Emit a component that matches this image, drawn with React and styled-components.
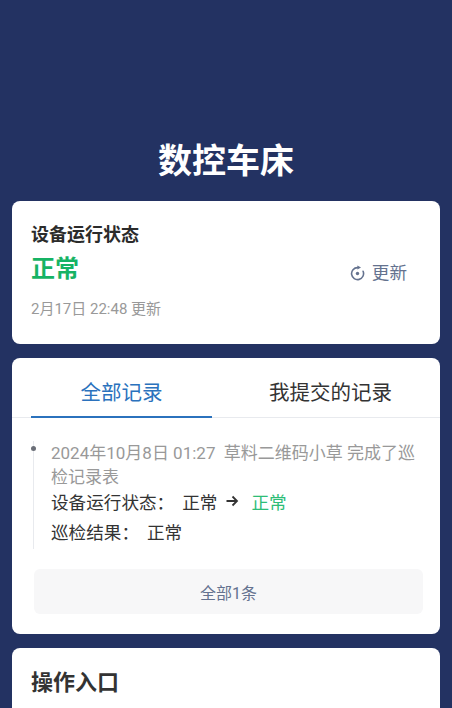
import styled, { createGlobalStyle } from "styled-components";

const GlobalStyle = createGlobalStyle`
  html, body {
    margin: 0;
    padding: 0;
    height: 100%;
    overflow: hidden;
  }
  body {
    background: #233262;
    font-family: Roboto, "Noto Sans CJK SC", sans-serif;
  }
`;

const Page = styled.div`
  height: 708px;
  overflow: hidden;
  padding: 137px 12px 0;
  box-sizing: border-box;
  display: flex;
  flex-direction: column;
`;

const Title = styled.h1`
  margin: 0 0 16px;
  height: 48px;
  line-height: 48px;
  color: #fff;
  font-size: 34px;
  font-weight: 700;
  text-align: center;
`;

const Card = styled.section`
  background: #fff;
  border-radius: 8px;
  margin-bottom: 14px;
  flex-shrink: 0;
`;

const StatusCard = styled(Card)`
  height: 143px;
  box-sizing: border-box;
  padding: 22px 19px 0;
`;

const StatusLabel = styled.div`
  font-size: 18px;
  font-weight: 700;
  line-height: 24px;
  color: #2b2b2b;
`;

const StatusRow = styled.div`
  display: flex;
  justify-content: space-between;
  align-items: center;
  height: 44px;
`;

const StatusValue = styled.div`
  font-size: 24px;
  font-weight: 700;
  line-height: 30px;
  color: #16b364;
`;

const RefreshButton = styled.div`
  display: flex;
  align-items: center;
  gap: 7px;
  margin: 8px 14px 0 0;
  font-size: 17.6px;
  line-height: 24px;
  color: #64728f;
`;

const UpdatedAt = styled.div`
  margin-top: 7px;
  font-size: 15px;
  line-height: 22px;
  color: #999;
`;

const RecordCard = styled(Card)`
  height: 276px;
`;

const Tabs = styled.div`
  display: grid;
  grid-template-columns: 181px 1fr;
  height: 60px;
  padding-left: 19px;
  border-bottom: 1px solid #e8eaee;
  box-sizing: border-box;
`;

const Tab = styled.div`
  display: flex;
  align-items: center;
  justify-content: center;
  font-size: 20.5px;
  height: 60px;
  box-sizing: border-box;
  padding: ${({ $active }) => ($active ? "7px 0 0" : "7px 0 0 9px")};
  color: ${({ $active }) => ($active ? "#2b72bd" : "#333")};
  border-bottom: 2.5px solid ${({ $active }) => ($active ? "#2b72bd" : "transparent")};
`;

const Timeline = styled.div`
  margin: 23px 0 0 21px;
  padding-left: 17px;
  border-left: 1px solid #e8eaee;
  position: relative;
  width: 368px;
  height: 108px;
`;

const Dot = styled.span`
  position: absolute;
  left: -3px;
  top: 5px;
  width: 5px;
  height: 5px;
  border-radius: 50%;
  background: #6b6f78;
`;

const LogText = styled.div`
  font-size: 17px;
  line-height: 24px;
  color: #999;
  white-space: pre-wrap;
`;

const DetailRow = styled.div`
  display: flex;
  align-items: center;
  height: 24px;
  margin-bottom: 6px;
  font-size: 17.6px;
  color: #333;
`;

const Label = styled.span`
  margin-right: 8px;
`;

const Arrow = styled.svg`
  width: 14px;
  height: 14px;
  margin: 0 12px 0 8px;
`;

const Good = styled.span`
  color: #2dbd77;
`;

const MoreButton = styled.div`
  margin: 20px 17px 0 22px;
  height: 45px;
  border-radius: 6px;
  background: #f7f7f8;
  display: flex;
  align-items: center;
  justify-content: center;
  font-size: 16px;
  color: #64728f;
`;

const EntryCard = styled(Card)`
  height: 120px;
  margin-bottom: 0;
  padding: 19px 19px 0;
  box-sizing: border-box;
`;

const EntryTitle = styled.h2`
  margin: 0;
  font-size: 22px;
  font-weight: 700;
  line-height: 32px;
  color: #333;
`;

function RefreshIcon() {
  return (
    <svg width="15" height="16" viewBox="0 0 15 16" fill="none">
      <path d="M7.5 2.6A6 6 0 1 0 13.1 6.3" stroke="#64728f" strokeWidth="1.6" strokeLinecap="round" />
      <path d="M7.4 0.6 11 2.6 7.4 4.6Z" fill="#64728f" />
      <circle cx="7.5" cy="8.5" r="1.7" fill="#64728f" />
    </svg>
  );
}

export default function App() {
  return (
    <>
      <GlobalStyle />
      <Page>
        <Title>数控车床</Title>
        <StatusCard>
          <StatusLabel>设备运行状态</StatusLabel>
          <StatusRow>
            <StatusValue>正常</StatusValue>
            <RefreshButton>
              <RefreshIcon />
              更新
            </RefreshButton>
          </StatusRow>
          <UpdatedAt>2月17日 22:48 更新</UpdatedAt>
        </StatusCard>
        <RecordCard>
          <Tabs>
            <Tab $active>全部记录</Tab>
            <Tab>我提交的记录</Tab>
          </Tabs>
          <Timeline>
            <Dot />
            <LogText>2024年10月8日 01:27  草料二维码小草 完成了巡检记录表</LogText>
            <DetailRow>
              <Label>设备运行状态：</Label>
              正常
              <Arrow viewBox="0 0 14 14" fill="none">
                <path d="M1.5 7h10.5M7.5 2.5 12 7l-4.5 4.5" stroke="#333" strokeWidth="1.8" />
              </Arrow>
              <Good>正常</Good>
            </DetailRow>
            <DetailRow>
              <Label>巡检结果：</Label>
              正常
            </DetailRow>
          </Timeline>
          <MoreButton>全部1条</MoreButton>
        </RecordCard>
        <EntryCard>
          <EntryTitle>操作入口</EntryTitle>
        </EntryCard>
      </Page>
    </>
  );
}
